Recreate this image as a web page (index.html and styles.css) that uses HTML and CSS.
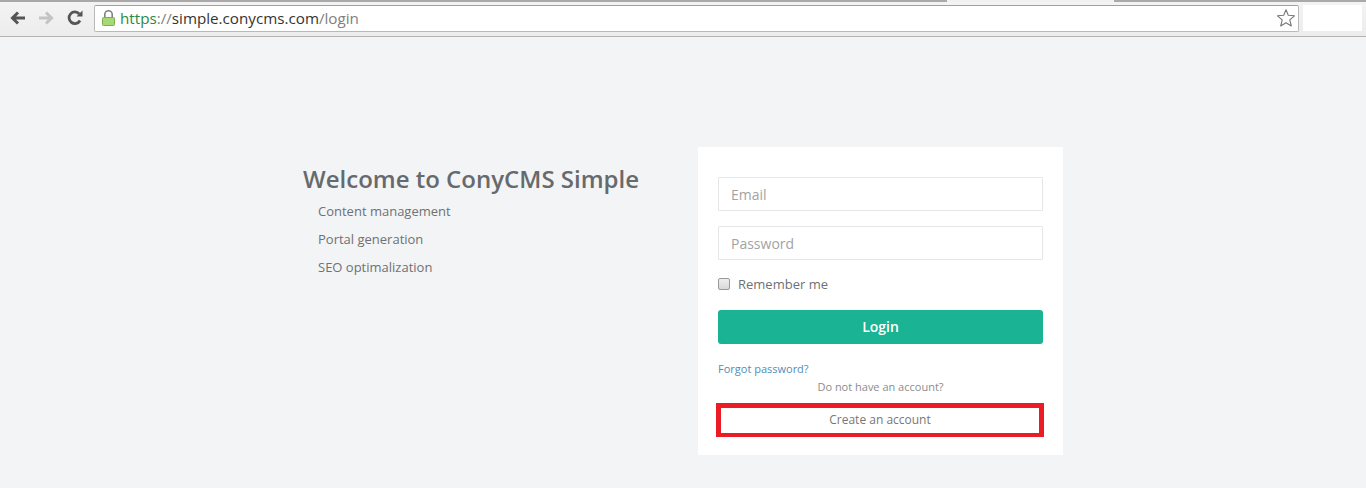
FILE: index.html
```html
<!DOCTYPE html>
<html lang="en">
<head>
<meta charset="utf-8">
<title>ConyCMS Simple - Login</title>
<link rel="stylesheet" href="styles.css">
</head>
<body>
<header class="chrome">
  <div class="tabline"><span class="tabline-a"></span><span class="tabline-gap"></span><span class="tabline-b"></span></div>
  <div class="toolbar">
    <div class="nav">
      <svg class="nav-icon" viewBox="0 0 18 18" width="18" height="18"><path d="M16 9H4M9 3.500 3.500 9 9 14.500" fill="none" stroke="#555" stroke-width="3"/></svg>
      <svg class="nav-icon" viewBox="0 0 18 18" width="18" height="18"><path d="M2 9h12M9 3.500 14.500 9 9 14.500" fill="none" stroke="#c4c4c4" stroke-width="3"/></svg>
      <svg class="nav-icon" viewBox="0 0 18 18" width="18" height="18"><path d="M14 11.500A5.800 5.800 0 1 1 13.300 5" fill="none" stroke="#555" stroke-width="2.800"/><path d="M10.500 7.500h6v-6z" fill="#555"/></svg>
    </div>
    <div class="omnibox">
      <svg class="lock" viewBox="0 0 13 16" width="13" height="16"><path d="M2.800 8V4.300a3.700 3.500 0 0 1 7.400 0V8" fill="none" stroke="#808080" stroke-width="1.600"/><rect x="0.500" y="7.500" width="12" height="8" rx="1" fill="#a6d873" stroke="#7cb04e"/></svg>
      <span class="url"><span class="scheme">https</span><span class="sep">://</span><span class="host">simple.conycms.com</span><span class="sep">/login</span></span>
      <svg class="star" viewBox="0 0 20 20" width="20" height="20"><path d="M10 1.800 12.300 7.300 18.500 7.800 13.800 11.800 15.300 18 10 14.700 4.700 18 6.200 11.800 1.500 7.800 7.700 7.300Z" fill="#fff" stroke="#777" stroke-width="1.100" stroke-linejoin="round"/></svg>
    </div>
    <div class="ext-patch"></div>
  </div>
</header>
<main class="page">
  <section class="intro">
    <h1 class="intro-title">Welcome to ConyCMS Simple</h1>
    <ul class="features">
      <li>Content management</li>
      <li>Portal generation</li>
      <li>SEO optimalization</li>
    </ul>
  </section>
  <form class="card">
    <input class="field" type="text" placeholder="Email">
    <input class="field" type="password" placeholder="Password">
    <label class="remember"><span class="check"></span>Remember me</label>
    <button class="login" type="button">Login</button>
    <a class="forgot" href="#">Forgot password?</a>
    <p class="noaccount">Do not have an account?</p>
    <a class="create" href="#">Create an account</a>
  </form>
</main>
</body>
</html>
```
FILE: styles.css
```css
* { box-sizing: border-box; }
html, body { margin: 0; padding: 0; }
body {
  height: 488px;
  overflow: hidden;
  background: #f3f4f6;
  font-family: "Open Sans", "Noto Sans", sans-serif;
  color: #6f7173;
}
.chrome {
  height: 37px;
  background: linear-gradient(#f4f4f4, #ececec);
  border-bottom: 1px solid #b4b4b4;
}
.tabline { display: flex; height: 2px; }
.tabline-a { width: 947px; background: #a9a9a9; }
.tabline-gap { width: 167px; background: #f1f1f1; }
.tabline-b { flex: 1; background: #a9a9a9; }
.toolbar { display: flex; align-items: flex-start; padding: 3px 4px 0 8px; }
.nav { display: flex; gap: 11px; width: 86px; padding-top: 4px; }
.nav-icon:first-child { margin-left: 1px; margin-right: -1px; }
.omnibox {
  display: flex;
  align-items: center;
  width: 1205px;
  height: 27px;
  padding: 0 2px 0 7px;
  background: #fff;
  border: 1px solid #b9b9b9;
  border-top-color: #a0a0a0;
  border-radius: 2px;
}
.lock { flex: none; margin-right: 5px; margin-bottom: 2px; }
.url { flex: 1; padding-bottom: 2px; font-family: "Open Sans", sans-serif; font-size: 15.2px; white-space: nowrap; }
.scheme { color: #2a8a3e; }
.sep { color: #808080; }
.host { color: #333; }
.star { flex: none; margin-bottom: 2px; }
.ext-patch { width: 59px; height: 26px; margin-left: 4px; background: #fff; }
.page { display: flex; padding: 110px 0 0 303px; }
.intro { width: 395px; padding-top: 14px; }
.intro-title { margin: 0 0 5px; font-size: 24px; line-height: 36px; font-weight: 600; color: #676a6c; }
.features { margin: 0; padding: 0 0 0 15px; list-style: none; font-size: 13px; line-height: 18px; }
.features li { margin-bottom: 10px; }
.card {
  display: flex;
  flex-direction: column;
  width: 365px;
  height: 308px;
  padding: 30px 20px 0;
  background: #fff;
}
.field {
  height: 34px;
  margin-bottom: 15px;
  padding: 0 12px;
  background: #fff;
  border: 1px solid #e5e6e7;
  border-radius: 1px;
  font: 14px "Open Sans", sans-serif;
  color: #676a6c;
}
.field::placeholder { color: #a3a3a3; opacity: 1; }
.remember { display: flex; align-items: center; height: 18px; margin-bottom: 17px; font-size: 13px; }
.check {
  width: 12px;
  height: 12px;
  margin-right: 8px;
  background: linear-gradient(#ededed, #d8d8d8);
  border: 1px solid #9a9a9a;
  border-radius: 2px;
}
.login {
  height: 34px;
  margin-bottom: 16px;
  padding: 0 0 2px;
  background: #1ab394;
  border: 0;
  border-radius: 3px;
  color: #fff;
  font: 600 14px "Open Sans", sans-serif;
}
.forgot { height: 18px; font-size: 11px; line-height: 18px; color: #4f8eb8; text-decoration: none; }
.noaccount { height: 18px; margin: 0 0 7px; font-size: 11px; line-height: 18px; text-align: center; color: #8c8c8c; }
.create {
  height: 34px;
  margin: 0 -1px 0 -2px;
  background: #fff;
  border: 5px solid #ea1c24;
  border-bottom-width: 4px;
  font-size: 12px;
  line-height: 24px;
  text-align: center;
  color: #777;
  text-decoration: none;
}
```
